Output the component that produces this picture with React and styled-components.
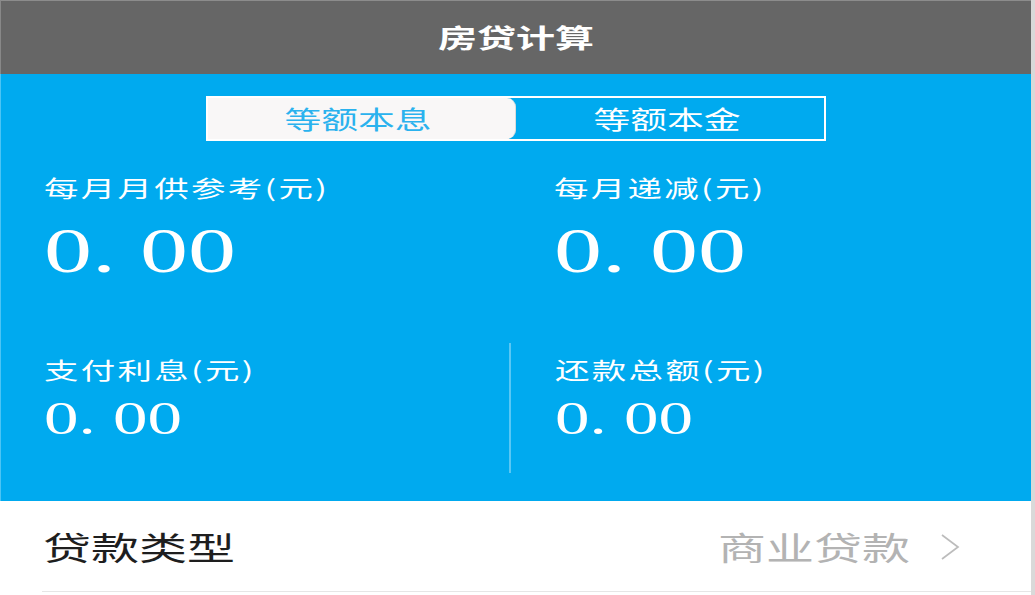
import styled, { createGlobalStyle } from "styled-components"

const GlobalStyle = createGlobalStyle`
    html, body {
        margin: 0;
        padding: 0;
        background: #fff;
    }
    * {
        box-sizing: border-box;
    }
`

const cjk = `"Noto Sans CJK SC", "Noto Sans", sans-serif`

const results = [
    { id: 1, label: "每月月供参考(元)", value: "0. 00", big: true },
    { id: 2, label: "每月递减(元)", value: "0. 00", big: true },
    { id: 3, label: "支付利息(元)", value: "0. 00" },
    { id: 4, label: "还款总额(元)", value: "0. 00", divider: true },
]

function Chevron() {
    return (
        <svg width="24" height="32" viewBox="0 0 24 32">
            <polyline points="4,4 20,16 4,28" fill="none" stroke="#bcbcbc" strokeWidth="1.7" />
        </svg>
    )
}

function App() {
    return (
        <Page>
            <GlobalStyle />

            <Header>
                <Wide $origin="center">房贷计算</Wide>
            </Header>

            <Summary>
                <Toggle>
                    <ToggleItem $active>
                        <Wide $origin="center">等额本息</Wide>
                    </ToggleItem>
                    <ToggleItem>
                        <Wide $origin="center">等额本金</Wide>
                    </ToggleItem>
                </Toggle>

                <ResultGrid>
                    {results.map((item) => (
                        <Cell key={item.id} $big={item.big} $divider={item.divider}>
                            <Label>
                                <Wide>{item.label}</Wide>
                            </Label>
                            <Value $big={item.big}>
                                <Wide>{item.value}</Wide>
                            </Value>
                        </Cell>
                    ))}
                </ResultGrid>
            </Summary>

            <OptionList>
                <OptionRow>
                    <OptionName>
                        <Wide>贷款类型</Wide>
                    </OptionName>
                    <OptionValue>
                        <Wide $origin="right">商业贷款</Wide>
                        <Chevron />
                    </OptionValue>
                </OptionRow>
            </OptionList>
        </Page>
    )
}

const Page = styled.div`
    width: 1035px;
    min-height: 595px;
    border-right: 4px solid #d9d9d9;
    background: #fff;
    font-family: ${cjk};
    overflow: hidden;
`

// the page is drawn one and a half times wider than tall
const Wide = styled.span`
    display: inline-block;
    white-space: pre;
    transform: scaleX(1.5);
    transform-origin: ${(p) => p.$origin || "left"} center;
`

const Header = styled.header`
    height: 74px;
    background: #666666;
    border-top: 1px solid #8c8c8c;
    border-left: 1px solid #888;
    display: flex;
    align-items: center;
    justify-content: center;
    padding-bottom: 3px;
    color: #fff;
    font-size: 26px;
    font-weight: 700;
`

const Summary = styled.section`
    background: #00aaef;
    border-left: 1px solid #4cc4f4;
    padding: 22px 0 28px;
`

const Toggle = styled.div`
    display: flex;
    width: 620px;
    height: 45px;
    margin: 0 auto;
    border: 2px solid #fff;
`

const ToggleItem = styled.div`
    flex: 1;
    display: flex;
    align-items: center;
    justify-content: center;
    padding-right: 8px;
    font-size: 24.5px;
    background: ${(p) => (p.$active ? "#f9f7f7" : "#00aaef")};
    color: ${(p) => (p.$active ? "#2ab2ee" : "#fff")};
    border-radius: ${(p) => (p.$active ? "0 9px 9px 0" : "0")};
    border-right: ${(p) => (p.$active ? "1px solid #dcdcdc" : "none")};
    margin-right: ${(p) => (p.$active ? "1px" : "0")};
`

const ResultGrid = styled.div`
    display: grid;
    grid-template-columns: 510px 1fr;
    row-gap: 60px;
    margin-top: 35px;
`

const Cell = styled.div`
    display: flex;
    flex-direction: column;
    align-items: flex-start;
    gap: ${(p) => (p.$big ? "20px" : "15px")};
    padding: ${(p) => (p.$big ? "0 0 0 43px" : "15px 0 31px 43px")};
    padding-left: ${(p) => (p.$divider ? "44px" : "43px")};
    border-left: ${(p) => (p.$divider ? "2px solid rgba(255, 255, 255, 0.35)" : "none")};
    margin-left: ${(p) => (p.$divider ? "-2px" : "0")};
`

const Label = styled.div`
    color: #fff;
    font-size: 23px;
    line-height: 23px;
    letter-spacing: 1.5px;
`

const Value = styled.div`
    color: #fff;
    font-family: "Liberation Serif", "Times New Roman", serif;
    font-size: ${(p) => (p.$big ? "64px" : "46px")};
    line-height: 1;
`

const OptionList = styled.div`
    padding-left: 42px;
`

const OptionRow = styled.div`
    height: 91px;
    display: flex;
    align-items: center;
    justify-content: space-between;
    padding-right: 69px;
    border-bottom: 1px solid #e6e6e6;
    font-size: 32px;
`

const OptionName = styled.div`
    color: #1e1e1e;
    padding-left: 1px;
`

const OptionValue = styled.div`
    display: flex;
    align-items: center;
    gap: 28px;
    color: #b3b3b3;

    svg {
        margin-top: 2px;
    }
`

export default App
